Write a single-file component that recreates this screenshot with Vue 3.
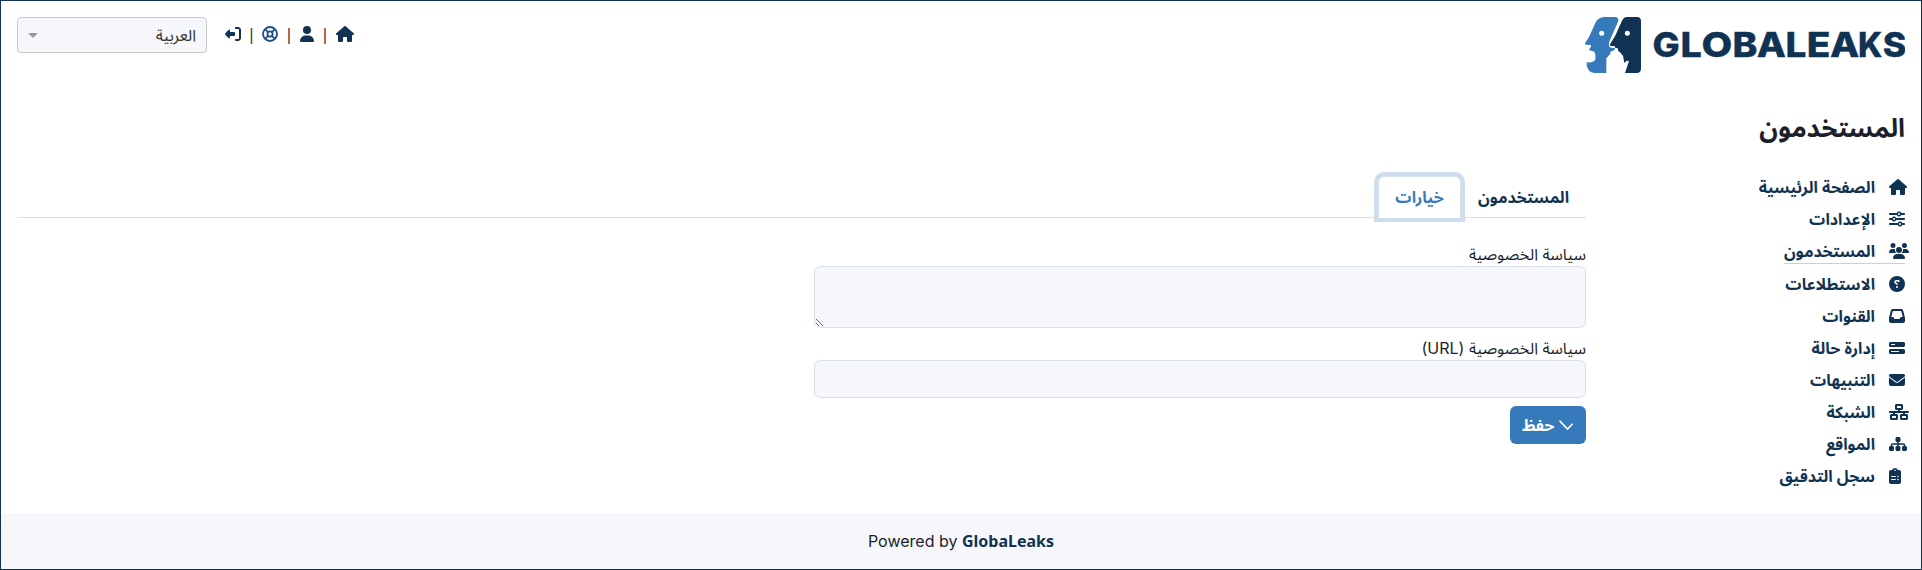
<script setup>
const house = 'M575.8 255.5c0 18-15 32.1-32 32.1h-32l.7 160.2c0 2.7-.2 5.4-.5 8.1V472c0 22.1-17.9 40-40 40H392c-22.1 0-40-17.9-40-40V384c0-17.7-14.3-32-32-32H256c-17.7 0-32 14.3-32 32v88c0 22.1-17.9 40-40 40H104c-22.1 0-40-17.9-40-40V287.6H32c-18 0-32-14-32-32.1c0-9 3-17 10-24L266.4 8c7-7 15-8 22-8s15 2 21 7L564.8 231.5c8 7 12 15 11 24z'
const user = 'M224 256A128 128 0 1 0 224 0a128 128 0 1 0 0 256zm-45.7 48C79.8 304 0 383.8 0 482.3C0 498.7 13.3 512 29.7 512H418.3c16.4 0 29.7-13.3 29.7-29.7C448 383.8 368.2 304 269.7 304H178.3z'
const brand = [
  ['G', 69.6, 27.2], ['L', 97.4, 21.3], ['O', 118.6, 30.8], ['B', 149.4, 24.9], ['A', 173.7, 29.2],
  ['L', 202.4, 20.9], ['E', 223.7, 23.7], ['A', 246.9, 29.3], ['K', 275, 24.4], ['S', 299.7, 23.6],
]
const menu = [
  { label: 'الصفحة الرئيسية', w: 576, d: house },
  { label: 'الإعدادات', w: 512, d: 'M0 416c0 17.7 14.3 32 32 32l54.7 0c12.3 28.3 40.5 48 73.3 48s61-19.7 73.3-48L480 448c17.7 0 32-14.3 32-32s-14.3-32-32-32l-246.7 0c-12.3-28.3-40.5-48-73.3-48s-61 19.7-73.3 48L32 384c-17.7 0-32 14.3-32 32zm128 0a32 32 0 1 1 64 0 32 32 0 1 1 -64 0zM320 256a32 32 0 1 1 64 0 32 32 0 1 1 -64 0zm32-80c-32.8 0-61 19.7-73.3 48L32 224c-17.7 0-32 14.3-32 32s14.3 32 32 32l246.7 0c12.3 28.3 40.5 48 73.3 48s61-19.7 73.3-48l54.7 0c17.7 0 32-14.3 32-32s-14.3-32-32-32l-54.7 0c-12.3-28.3-40.5-48-73.3-48zM192 128a32 32 0 1 1 0-64 32 32 0 1 1 0 64zm73.3-64C253 35.7 224.8 16 192 16s-61 19.7-73.3 48L32 64C14.3 64 0 78.3 0 96s14.3 32 32 32l86.7 0c12.3 28.3 40.5 48 73.3 48s61-19.7 73.3-48L480 128c17.7 0 32-14.3 32-32s-14.3-32-32-32L265.3 64z' },
  { label: 'المستخدمون', w: 640, active: true, d: 'M144 0a80 80 0 1 1 0 160A80 80 0 1 1 144 0zM512 0a80 80 0 1 1 0 160A80 80 0 1 1 512 0zM0 298.7C0 239.8 47.8 192 106.7 192h42.7c15.9 0 31 3.5 44.6 9.7c-1.3 7.2-1.9 14.7-1.9 22.3c0 38.2 16.8 72.5 43.3 96H21.3C9.6 320 0 310.4 0 298.7zM405.3 320h-.7c26.6-23.5 43.3-57.8 43.3-96c0-7.6-.7-15-1.9-22.3c13.6-6.3 28.7-9.7 44.6-9.7h42.7C592.2 192 640 239.8 640 298.7c0 11.8-9.6 21.3-21.3 21.3H405.3zM224 224a96 96 0 1 1 192 0 96 96 0 1 1 -192 0zM128 485.3C128 411.7 187.7 352 261.3 352H378.7C452.3 352 512 411.7 512 485.3c0 14.7-11.9 26.7-26.7 26.7H154.7c-14.7 0-26.7-11.9-26.7-26.7z' },
  { label: 'الاستطلاعات', w: 512, d: 'M256 512A256 256 0 1 0 256 0a256 256 0 1 0 0 512zM169.8 165.3c7.9-22.3 29.1-37.3 52.8-37.3h58.3c34.9 0 63.1 28.3 63.1 63.1c0 22.6-12.1 43.5-31.7 54.8L280 264.4c-.2 13-10.9 23.6-24 23.6c-13.3 0-24-10.7-24-24V250.5c0-8.6 4.6-16.5 12.1-20.8l44.3-25.4c4.7-2.7 7.6-7.7 7.6-13.1c0-8.4-6.8-15.1-15.1-15.1H222.6c-3.4 0-6.4 2.1-7.5 5.3l-.4 1.2c-4.4 12.5-18.2 19-30.6 14.6s-19-18.2-14.6-30.6l.3-1.3zM224 352a32 32 0 1 1 64 0 32 32 0 1 1 -64 0z' },
  { label: 'القنوات', w: 512, d: 'M121 32C91.6 32 66 52 58.9 80.5L1.9 308.4C.6 313.5 0 318.7 0 323.9V416c0 35.3 28.7 64 64 64H448c35.3 0 64-28.7 64-64V323.9c0-5.2-.6-10.4-1.9-15.5l-57-227.9C446 52 420.4 32 391 32H121zm0 64H391l48 192H387.8c-12.1 0-23.2 6.8-28.6 17.7l-14.3 28.6c-5.4 10.8-16.5 17.7-28.6 17.7H195.8c-12.1 0-23.2-6.8-28.6-17.7l-14.3-28.6c-5.4-10.8-16.5-17.7-28.6-17.7H73L121 96z' },
  { label: 'إدارة حالة', w: 512, d: 'M448 160H320V128H448v32zM48 64C21.5 64 0 85.5 0 112v64c0 26.5 21.5 48 48 48H464c26.5 0 48-21.5 48-48V112c0-26.5-21.5-48-48-48H48zM448 352v32H192V352H448zM48 288c-26.5 0-48 21.5-48 48v64c0 26.5 21.5 48 48 48H464c26.5 0 48-21.5 48-48V336c0-26.5-21.5-48-48-48H48z' },
  { label: 'التنبيهات', w: 512, d: 'M48 64C21.5 64 0 85.5 0 112c0 15.1 7.1 29.3 19.2 38.4L236.8 313.6c11.4 8.5 27 8.5 38.4 0L492.8 150.4c12.1-9.1 19.2-23.3 19.2-38.4c0-26.5-21.5-48-48-48H48zM0 176V384c0 35.3 28.7 64 64 64H448c35.3 0 64-28.7 64-64V176L294.4 339.2c-22.8 17.1-54 17.1-76.8 0L0 176z' },
  { label: 'الشبكة', w: 640, d: 'M256 64H384v64H256V64zM240 0c-26.5 0-48 21.5-48 48v96c0 26.5 21.5 48 48 48h48v32H32c-17.7 0-32 14.3-32 32s14.3 32 32 32h96v32H80c-26.5 0-48 21.5-48 48v96c0 26.5 21.5 48 48 48H240c26.5 0 48-21.5 48-48V368c0-26.5-21.5-48-48-48H192V288H448v32H400c-26.5 0-48 21.5-48 48v96c0 26.5 21.5 48 48 48H560c26.5 0 48-21.5 48-48V368c0-26.5-21.5-48-48-48H512V288h96c17.7 0 32-14.3 32-32s-14.3-32-32-32H352V192h48c26.5 0 48-21.5 48-48V48c0-26.5-21.5-48-48-48H240zM96 448V384H224v64H96zm320-64H544v64H416V384z' },
  { label: 'المواقع', w: 576, d: 'M208 80c0-26.5 21.5-48 48-48h64c26.5 0 48 21.5 48 48v64c0 26.5-21.5 48-48 48h-8v40H464c30.9 0 56 25.1 56 56v32h8c26.5 0 48 21.5 48 48v64c0 26.5-21.5 48-48 48H464c-26.5 0-48-21.5-48-48V368c0-26.5 21.5-48 48-48h8V288c0-4.4-3.6-8-8-8H312v40h8c26.5 0 48 21.5 48 48v64c0 26.5-21.5 48-48 48H256c-26.5 0-48-21.5-48-48V368c0-26.5 21.5-48 48-48h8V280H112c-4.4 0-8 3.6-8 8v32h8c26.5 0 48 21.5 48 48v64c0 26.5-21.5 48-48 48H48c-26.5 0-48-21.5-48-48V368c0-26.5 21.5-48 48-48h8V288c0-30.9 25.1-56 56-56H264V192h-8c-26.5 0-48-21.5-48-48V80z' },
  { label: 'سجل التدقيق', w: 384, d: 'M192 0c-41.8 0-77.4 26.7-90.5 64H64C28.7 64 0 92.7 0 128V448c0 35.3 28.7 64 64 64H320c35.3 0 64-28.7 64-64V128c0-35.3-28.7-64-64-64H282.5C269.4 26.7 233.8 0 192 0zm0 48a24 24 0 1 1 0 48 24 24 0 1 1 0-48zM72 272a24 24 0 1 1 48 0 24 24 0 1 1 -48 0zm104-16H304c8.8 0 16 7.2 16 16s-7.2 16-16 16H176c-8.8 0-16-7.2-16-16s7.2-16 16-16zM72 368a24 24 0 1 1 48 0 24 24 0 1 1 -48 0zm88 0c0-8.8 7.2-16 16-16H304c8.8 0 16 7.2 16 16s-7.2 16-16 16H176c-8.8 0-16-7.2-16-16z' },
]
</script>

<template>
  <div class="page" dir="rtl">
    <header class="header">
      <svg class="logo" viewBox="0 0 322 60" width="322" height="60">
        <g transform="translate(2 0) scale(.33333)">
          <path fill="#377abc" d="M58 0H92Q101 2 100 12L72 76V88L78 92 90 94 89 99 76 104V110L64 124V168H28Q8 166 5 144V136Q24 138 31 128Q34 114 28 104Q20 101 12 100L18 88V84L1 83 0 79 12 60 32 16Q40 1 58 0Z" />
          <path fill="#103253" d="M124 0H158Q168 2 168 12V156Q167 167 156 168H120L132 132Q124 130 118 138L114 116Q106 106 100 102L98 94 90 92V88L76 87 75 82 90 58 108 18Q114 2 124 0Z" />
          <circle cx="50" cy="49" r="7.5" fill="#fff" />
          <circle cx="127" cy="49" r="7.5" fill="#fff" />
        </g>
        <text v-for="(b, i) in brand" :key="i" class="brand" y="40" :x="b[1]" :textLength="b[2]" lengthAdjust="spacingAndGlyphs">{{ b[0] }}</text>
      </svg>
      <div class="tools">
        <svg class="ico" viewBox="0 0 576 512" width="18" height="16"><path :d="house" /></svg>
        <span class="bar">|</span>
        <svg class="ico" viewBox="0 0 448 512" width="14" height="16"><path :d="user" /></svg>
        <span class="bar">|</span>
        <svg class="ring" viewBox="0 0 16 16" width="16" height="16">
          <circle cx="8" cy="8" r="7" /><circle cx="8" cy="8" r="2.6" />
          <path d="M3.3 3.3l2.8 2.8M12.7 3.3L9.9 6.1M3.3 12.7l2.8-2.8M12.7 12.7L9.9 9.9" />
        </svg>
        <span class="bar last">|</span>
        <svg class="ico" viewBox="0 0 512 512" width="16" height="16"><path d="M352 96h64c17.7 0 32 14.3 32 32V384c0 17.7-14.3 32-32 32H352c-17.7 0-32 14.3-32 32s14.3 32 32 32h64c53 0 96-43 96-96V128c0-53-43-96-96-96H352c-17.7 0-32 14.3-32 32s14.3 32 32 32zM9.4 233.4c-12.5 12.5-12.5 32.800 0 45.300l112 112c12.500 12.500 38.600 9.400 38.600-22.700V320H288c17.700 0 32-14.300 32-32V224c0-17.700-14.300-32-32-32H160V144c0-32-26-35.200-38.600-22.600z" /></svg>
        <div class="select"><span>العربية</span><i class="caret"></i></div>
      </div>
    </header>

    <h1>المستخدمون</h1>

    <div class="body">
      <nav class="menu">
        <a v-for="m in menu" :key="m.label" class="item" :class="{ active: m.active }">
          <span class="box"><svg class="ico flip" :viewBox="`0 0 ${m.w} 512`" :width="m.w / 32" height="16"><path :d="m.d" fill-rule="evenodd" /></svg></span>
          <span>{{ m.label }}</span>
        </a>
      </nav>
      <main class="main">
        <div class="tabs">
          <a class="tab">المستخدمون</a>
          <a class="tab current">خيارات</a>
        </div>
        <label>سياسة الخصوصية</label>
        <textarea class="field area"></textarea>
        <label class="second">سياسة الخصوصية (URL)</label>
        <input class="field" type="text" />
        <button class="save">
          <svg viewBox="0 0 16 16" width="16" height="16"><path d="M1.500 3.500L9.700 12.200L15 6.800" /></svg>
          <span>حفظ</span>
        </button>
      </main>
    </div>

    <footer class="footer" dir="ltr">Powered by <b>GlobaLeaks</b></footer>
  </div>
</template>

<style>
body { background: #fff; }
</style>

<style scoped>
.page { box-sizing: border-box; height: 570px; border: 1px solid #103253; display: flex; flex-direction: column; font: 16px/24px Inter, "Noto Sans", "Noto Sans Arabic", sans-serif; color: #1d1f2a; overflow: hidden; }
.header { display: flex; justify-content: space-between; padding: 16px 16px 0; height: 56px; }
.logo { display: block; }
.brand { font: 800 34.5px Inter, sans-serif; fill: #103253; stroke: #103253; stroke-width: .3; direction: ltr; }
.tools { display: flex; align-items: flex-start; }
.ico { fill: #103253; display: block; overflow: visible; }
.tools > svg { margin-top: 9px; }
.ring { fill: none; stroke: #1e4f86; stroke-width: 1.8; }
.bar { width: 22px; text-align: center; margin-top: 5px; font-family: "Noto Sans", sans-serif; }
.last { width: 21px; }
.select { box-sizing: border-box; width: 190px; height: 36px; margin-right: 18px; border: 1px solid #c6c8ca; border-radius: 4px; background: #f5f7fb; padding: 0 10px; display: flex; align-items: center; justify-content: space-between; color: #333; }
.caret { border: 5px solid transparent; border-top-color: #999; border-bottom: 0; }
h1 { margin: 38px 16px 0; font-size: 25.6px; line-height: 34px; font-weight: 700; font-family: "Noto Sans", "Noto Sans Arabic", sans-serif; }
.body { display: flex; margin: 26px 16px 0; flex: 1; }
.menu { width: 319px; display: flex; flex-direction: column; align-items: flex-start; color: #103253; }
.item { display: flex; align-items: center; gap: 14px; height: 24px; padding: 4px 0 0; margin-bottom: 4px; font-weight: 700; font-family: "Noto Sans", "Noto Sans Arabic", sans-serif; }
.active { border-bottom: 1px solid #c3d2e3; }
.box { width: 16px; direction: ltr; }
.flip { transform: scaleX(-1); }
.main { flex: 1; display: flex; flex-direction: column; align-items: flex-start; padding-top: 5px; }
.tabs { box-sizing: border-box; align-self: stretch; display: flex; height: 42px; border-bottom: 1px solid #d8e0eb; margin-bottom: 24px; }
.tab { box-sizing: border-box; height: 42px; padding: 8px 16px; border: 1px solid transparent; border-radius: 6px 6px 0 0; color: #103253; font-weight: 700; font-family: "Noto Sans", "Noto Sans Arabic", sans-serif; }
.current { color: #377abc; background: #fff; border-color: #d8e0eb #d8e0eb #fff; box-shadow: 0 0 0 4px #cddded; }
.field { box-sizing: border-box; width: 772px; height: 38px; margin: 0; border: 1px solid #d9e0ea; border-radius: 6px; background: #f5f7fb; }
.area { height: 62px; resize: both; }
.second { margin-top: 8px; }
.save { display: flex; align-items: center; gap: 4px; margin-top: 8px; height: 38px; width: 76px; padding: 0 12px; border: 0; border-radius: 6px; background: #377abc; color: #fff; font: 700 16px/24px "Noto Sans", "Noto Sans Arabic", sans-serif; }
.save svg { fill: none; stroke: #fff; stroke-width: 1.6; }
.footer { height: 56px; background: #f5f7fb; text-align: center; line-height: 56px; }
.footer b { color: #103253; font-family: "Noto Sans", sans-serif; }
</style>
